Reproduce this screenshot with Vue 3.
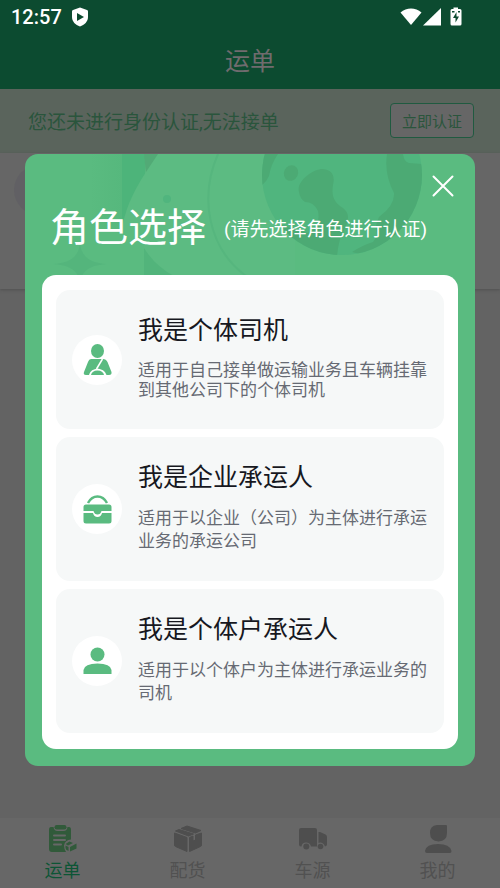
<script setup>
const tabs = [
  { id: 'waybill', label: '运单', active: true },
  { id: 'goods', label: '配货', active: false },
  { id: 'trucks', label: '车源', active: false },
  { id: 'mine', label: '我的', active: false },
]

const roles = [
  { id: 'driver', title: '我是个体司机', text: '适用于自己接单做运输业务且车辆挂靠到其他公司下的个体司机', compact: true },
  { id: 'company', title: '我是企业承运人', text: '适用于以企业（公司）为主体进行承运业务的承运公司' },
  { id: 'self', title: '我是个体户承运人', text: '适用于以个体户为主体进行承运业务的司机' },
]
</script>

<template>
  <div class="screen">
    <header class="top">
      <div class="status">
        <span class="time">12:57</span>
        <svg class="shield" width="18" height="20" viewBox="0 0 18 20" aria-hidden="true">
          <path fill="#fff" fill-rule="evenodd" d="M9 0.5 16 3Q17 3.400 17 4.500V10C17 14.500 13.500 18 9 19.500 4.500 18 1 14.500 1 10V4.500Q1 3.400 2 3ZM6 6V14L13 10Z" />
        </svg>
        <span class="spacer"></span>
        <svg width="64" height="20" viewBox="0 0 64 20" aria-hidden="true">
          <g fill="#fff">
            <path d="M0.500 5.500C6.500 0 15.500 0 21.500 5.500L11 18Z" />
            <path d="M23 18.500 41 1V18.500Z" />
            <path fill-rule="evenodd" d="M53.500 0.500H58V2H60Q61.500 2 61.500 3.500V17Q61.500 18.500 60 18.500H52Q50.500 18.500 50.500 17V3.500Q50.500 2 52 2H53.500ZM56.500 5 53 11H55.500V15.500L59 9.500H56.500ZM52 4V5.500H54.500V4ZM58 4V5.500H60V4Z" />
          </g>
        </svg>
      </div>
      <h1 class="page-title">运单</h1>
    </header>

    <section class="notice">
      <span>您还未进行身份认证,无法接单</span>
      <button type="button" class="verify">立即认证</button>
    </section>

    <main class="content">
      <div class="sheet"><span class="shade"></span></div>
    </main>

    <nav class="tabs">
      <a v-for="tab in tabs" :key="tab.id" href="#" class="tab" :class="{ active: tab.active }">
        <svg v-if="tab.id === 'waybill'" width="30" height="30" viewBox="0 0 30 30" aria-hidden="true">
          <path fill="#315a3a" d="M3 3H5.500Q6 7 9.500 7H15.500Q19 7 19.500 3H21Q23 3 23 6V15.500Q17 16 16 21.500 16 25 18 28H4Q1 28 1 25V6Q1 3 3 3Z" />
          <rect x="6.500" y="1" width="12" height="4.500" rx="2.200" fill="#315a3a" />
          <path stroke="#676767" stroke-width="2" stroke-linecap="round" d="M6 11.500H17M6 16H17M6 20.500H13" />
          <path fill="#315a3a" d="M17.500 20 21.500 17.500 25 19 20 21.500ZM17.500 21.500 20.500 23V27Q17.500 26 17.500 24ZM22 23 28.500 19.500V24.500L22 27.500Z" />
        </svg>
        <svg v-else-if="tab.id === 'goods'" width="30" height="30" viewBox="0 0 30 30" aria-hidden="true">
          <g fill="#4e4e4e" stroke="#4e4e4e" stroke-linejoin="round">
            <path d="M8 4.500 14 2 28 6.500 22.500 9ZM2.500 7 6 5.500 20.500 10 15.500 12Z" />
            <path d="M1.500 9 14 13.500V27.500L2.500 22.500Q1.500 22 1.500 21ZM16.500 13.500 20 12V17L22.500 16V11L28.500 9V21Q28.500 22 27.500 22.500L16.500 27.500Z" />
          </g>
        </svg>
        <svg v-else-if="tab.id === 'trucks'" width="30" height="30" viewBox="0 0 30 30" aria-hidden="true">
          <path fill="#4e4e4e" d="M3 4H17Q19 4 19 6V22.500H13Q12 18.500 8 18.500T3.500 22.500H3Q1 22.500 1 20.500V6Q1 4 3 4ZM20.500 8H22L27.500 10.500Q29 11.200 29 13V20.500Q29 22 27 22.500 25.500 18.500 22 18.500L20.500 19Z" />
          <circle cx="8.300" cy="22.500" r="3" fill="#4e4e4e" />
          <circle cx="22.500" cy="22.500" r="2.800" fill="#4e4e4e" />
        </svg>
        <svg v-else width="30" height="30" viewBox="0 0 30 30" aria-hidden="true">
          <path fill="#4e4e4e" d="M14 1H23Q24 1 24 2V9Q24 17 15.500 17.500 7 17 7 9 7 1.500 14 1ZM2 27Q3 20 15 20T28.500 27Q28.500 29 27 29H4Q2 29 2 27Z" />
        </svg>
        <span>{{ tab.label }}</span>
      </a>
    </nav>

    <div class="overlay">
      <section class="dialog" role="dialog" aria-modal="true" aria-labelledby="role-title">
        <svg class="art" width="450" height="122" viewBox="0 0 450 122" aria-hidden="true">
          <defs>
            <clipPath id="globe"><circle cx="317" cy="21" r="80" /></clipPath>
            <linearGradient id="band"><stop offset="0" stop-color="#5abb80" /><stop offset="1" stop-color="#56b87d" /></linearGradient>
          </defs>
          <path fill="url(#band)" d="M65 0H97V122H65Z" />
          <path fill="#4db47a" d="M97 0H120V122H97Z" />
          <path fill="#52aa76" d="M119 0H135L121 20Z" />
          <path fill="#5cbb82" d="M97 76Q100 50 121 18L133 0H270V122H97Z" />
          <path fill="#5abb80" d="M65 76H119V122H65Z" />
          <path fill="#52b47b" d="M119 94Q130 112 149 122H119Z" />
          <path fill="none" stroke="#56b67e" stroke-width="2" d="M193 0C174 43 183 94 221 122" />
          <circle cx="142" cy="45" r="4" fill="#50b57e" />
          <path fill="#54b57c" d="M28 110C44 109 53 104 55 90 57 104 66 109 82 110 66 111 57 116 55 128 53 116 44 111 28 110Z" />
          <circle cx="317" cy="21" r="80" fill="#50b57e" />
          <g clip-path="url(#globe)" fill="#4caa74">
            <path d="M235 0H253Q246 10 244 22 242 27 236 32Z" />
            <ellipse cx="266" cy="19" rx="7" ry="8" transform="rotate(25 266 19)" />
            <path d="M274 38C271 28 287 15 298 15 308 16 310 23 308 31 306 43 310 49 318 54 327 61 322 70 318 78Q313 88 312 103H270Q245 90 240 65 265 74 283 79 296 73 293 57 289 48 280 48 275 45 274 38Z" />
            <path d="M362 0H378Q379 8 384 9L398 10V70L355 105 327 98Q338 91 348 88L352 82Q349 72 354 63 370 51 369 39 359 20 362 0Z" />
          </g>
        </svg>
        <div class="dialog-head">
          <button type="button" class="close" aria-label="关闭">
            <svg width="22" height="22" viewBox="0 0 22 22" aria-hidden="true">
              <path d="M1.500 1.500 20.500 20.500M20.500 1.500 1.500 20.500" stroke="#fff" stroke-width="2" stroke-linecap="round" />
            </svg>
          </button>
          <div class="heading">
            <h2 id="role-title">角色选择</h2>
            <span class="hint">(请先选择角色进行认证)</span>
          </div>
        </div>
        <div class="panel">
          <button v-for="role in roles" :key="role.id" type="button" class="role" :class="{ compact: role.compact }">
            <span class="avatar">
              <svg v-if="role.id === 'driver'" width="30" height="32" viewBox="0 0 30 32" aria-hidden="true">
                <ellipse cx="15.500" cy="7" rx="6.500" ry="7" fill="#5abb80" />
                <path fill="#5abb80" d="M9 15H21Q24 15 25.500 18L29.500 28Q30 31 27 31H24.500C22 22.500 9 22.500 7 31H4Q1 31 2 28L6 18Q7 15 9 15Z" />
                <path fill="#5abb80" d="M9 31Q10 26.500 15.500 26.500T22 31Z" />
                <path stroke="#fff" stroke-width="1.500" d="M20.500 15 14.500 25" />
              </svg>
              <svg v-else-if="role.id === 'company'" width="30" height="30" viewBox="0 0 30 30" aria-hidden="true">
                <path fill="none" stroke="#5abb80" stroke-width="2.500" d="M6 9Q9.500 2.500 15.500 2.500T25 9" />
                <path fill="#5abb80" d="M4 10.500H27Q29.500 10.500 29.500 13V17H19.500Q18.500 20.500 15.500 20.500T11.500 17H1.500V13Q1.500 10.500 4 10.500ZM1.500 19H11Q12 23 15.500 23T20 19H29.500V27Q29.500 29.500 27 29.500H4Q1.500 29.500 1.500 27Z" />
              </svg>
              <svg v-else width="30" height="28" viewBox="0 0 30 28" aria-hidden="true">
                <circle cx="15.500" cy="7.500" r="7" fill="#5abb80" />
                <path fill="#5abb80" d="M1.500 27V23Q2.500 16.500 15.500 16.500T29.500 23V27Z" />
              </svg>
            </span>
            <span class="copy">
              <span class="role-title">{{ role.title }}</span>
              <span class="role-text">{{ role.text }}</span>
            </span>
          </button>
        </div>
      </section>
    </div>
  </div>
</template>

<style>
body {
  margin: 0;
}
</style>

<style scoped>
* {
  box-sizing: border-box;
}

.screen {
  position: relative;
  display: flex;
  flex-direction: column;
  min-height: 100vh;
  background: #636363;
  font-family: Roboto, "Noto Sans CJK SC", sans-serif;
}

button {
  padding: 0;
  border: 0;
  background: none;
  font-family: inherit;
}

h1,
h2 {
  margin: 0;
  font-weight: 400;
}

.top {
  height: 89px;
  background: #0c4b30;
}

.status {
  display: flex;
  align-items: center;
  height: 32px;
  padding: 2px 36px 0 11px;
}

.time {
  color: #fff;
  font-size: 20px;
  font-weight: 500;
}

.shield {
  margin-left: 9px;
}

.spacer {
  flex: 1;
}

.page-title {
  color: #706b6e;
  font-size: 25px;
  line-height: 60px;
  text-align: center;
}

.notice {
  display: flex;
  align-items: center;
  justify-content: space-between;
  height: 64px;
  padding: 0 26px 2px 28px;
  background: #5a645c;
  color: #2a553c;
  font-size: 19px;
}

.verify {
  width: 84px;
  height: 35px;
  border: 1px solid #205a40;
  border-radius: 4px;
  background: #666;
  color: #2a553c;
  font-size: 15px;
}

.content {
  flex: 1;
}

.sheet {
  height: 136px;
  padding: 12px 14px;
  background: #666;
  box-shadow: 0 1px 3px #505050;
}

.shade {
  display: block;
  width: 50px;
  height: 50px;
  border-radius: 25px;
  background: #616064;
}

.tabs {
  display: flex;
  height: 70px;
  background: #676767;
}

.tab {
  flex: 1;
  display: flex;
  flex-direction: column;
  align-items: center;
  padding-top: 6px;
  color: #515151;
  font-size: 18px;
  line-height: 34px;
  text-decoration: none;
}

.tab.active {
  color: #0c5535;
}

.overlay {
  position: absolute;
  inset: 0;
  padding: 154px 25px 0;
}

.dialog {
  position: relative;
  overflow: hidden;
  padding: 0 17px 17px;
  border-radius: 13px;
  background: #5abb80;
}

.art {
  position: absolute;
  top: 0;
  left: 0;
}

.dialog-head {
  position: relative;
  display: flex;
  flex-direction: column;
  height: 121px;
  padding: 21px 4px 0 8px;
  color: #fff;
}

.close {
  align-self: flex-end;
  width: 22px;
  height: 22px;
}

.close svg {
  display: block;
}

.heading {
  display: flex;
  align-items: center;
  gap: 18px;
  white-space: nowrap;
}

h2 {
  padding-top: 2px;
  font-size: 39px;
  line-height: 58px;
}

.hint {
  font-size: 19px;
}

.panel {
  position: relative;
  display: flex;
  flex-direction: column;
  gap: 8px;
  padding: 15px 14px 16px;
  border-radius: 14px;
  background: #fff;
}

.role {
  display: flex;
  align-items: center;
  min-height: 144px;
  padding: 0 12px 0 16px;
  border-radius: 14px;
  background: #f6f8f8;
  text-align: left;
}

.role.compact {
  min-height: 139px;
}

.avatar {
  display: flex;
  flex: none;
  align-items: center;
  justify-content: center;
  width: 50px;
  height: 50px;
  border-radius: 50%;
  background: #fff;
}

.copy {
  display: flex;
  flex: 1;
  flex-direction: column;
  align-self: flex-start;
  padding: 21px 0 0 16px;
}

.role-title {
  color: #17181f;
  font-size: 25px;
  line-height: 40px;
}

.role-text {
  margin-top: 9px;
  color: #666a73;
  font-size: 17px;
  line-height: 23px;
}

.compact .role-text {
  line-height: 20px;
}
</style>
